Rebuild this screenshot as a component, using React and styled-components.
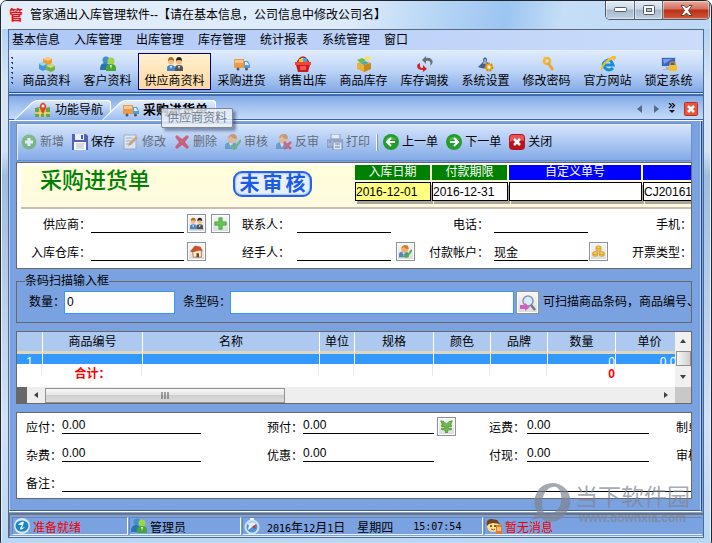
import React from "react";
import styled, { createGlobalStyle, css } from "styled-components";

const GlobalStyle = createGlobalStyle`
  * { box-sizing: border-box; }
  html, body { margin: 0; padding: 0; background: #fff; }
  body, button, input {
    font-family: "Liberation Sans", "Noto Sans CJK SC", sans-serif;
    font-size: 12px;
    color: #000;
  }
  button { padding: 0; border: 0; background: none; cursor: default; }
`;

const Window = styled.div`
  position: relative;
  display: flex;
  flex-direction: column;
  min-height: 100vh;
  padding: 0 7px 8px 7px;
  border: 1px solid #20262e;
  border-radius: 7px 7px 6px 6px;
  overflow: hidden;
  background: linear-gradient(180deg, #d3e4f7 0, #b3d2f4 28px, #d5e5f5 80px, #d3e3f3 150px, #9fbde0 175px, #d2e2f2 420px, #b9d7f3 100%);
  box-shadow: inset 0 0 0 1px #e8f3fd;
`;

const TitleBar = styled.header`
  display: flex;
  align-items: flex-start;
  height: 28px;
  flex: none;
  margin: 0 -6px;
  padding-left: 7px;
  background: linear-gradient(100deg, #e4eefa 0, #dceafa 50%, #b4d4f5 62%, #9cc5f1 71%, #c6def7 79%, #bcd8f6 100%);
`;

const AppMark = styled.span`
  width: 15px;
  margin-top: 7px;
  font-size: 14px;
  line-height: 15px;
  font-weight: 700;
  color: #f00d0d;
`;

const TitleText = styled.h1`
  flex: 1;
  margin: 6px 0 0 6px;
  font-size: 12px;
  line-height: 16px;
  font-weight: 400;
  white-space: nowrap;
`;

const Controls = styled.div`
  display: flex;
  height: 19px;
  border: 1px solid #4c5a6c;
  border-top: 0;
  border-radius: 0 0 5px 5px;
  overflow: hidden;
`;

const Control = styled.button`
  display: grid;
  place-items: center;
  width: ${(p) => (p.$close ? 47 : 28)}px;
  border-left: ${(p) => (p.$first ? 0 : 1)}px solid #5c6b7d;
  background: ${(p) => (p.$close
    ? "linear-gradient(#e9a99c 0, #d4705c 45%, #b92e15 50%, #d2593b 100%)"
    : "linear-gradient(#e4edf6 0, #c9d7e6 45%, #a5b7cb 50%, #c2d2e4 100%)")};
  box-shadow: inset 0 0 0 1px rgba(255, 255, 255, 0.45);
`;

const Client = styled.div`
  flex: 1;
  display: flex;
  flex-direction: column;
  border: 1px solid #4d6b96;
  border-top-color: #5b6876;
  background: #7ba2e0;
  overflow: hidden;
`;

const MenuBar = styled.nav`
  display: flex;
  gap: 14px;
  height: 21px;
  flex: none;
  padding-left: 3px;
  background: linear-gradient(90deg, #aec8f7, #cbdcfa);
  border-bottom: 1px solid #e3edfc;
`;

const MenuItem = styled.button`
  line-height: 20px;
  white-space: nowrap;
`;

const MainBar = styled.div`
  display: flex;
  align-items: flex-start;
  height: 42px;
  flex: none;
  padding-top: 2px;
  background: linear-gradient(#deebfd 0, #c0d6f8 45%, #82a9e5 100%);
  border-bottom: 1px solid #27509a;
`;

const Grip = styled.span`
  width: 7px;
  height: 32px;
  margin-top: 2px;
  flex: none;
  background: radial-gradient(circle, #27416f 0 1px, transparent 1px) 0 0 / 7px 5px;
`;

const MainButton = styled.button`
  display: flex;
  flex-direction: column;
  align-items: center;
  flex: none;
  width: ${(p) => (p.$active ? 73 : 61)}px;
  height: 37px;
  padding-top: 2px;
  border: 1px solid ${(p) => (p.$active ? "#000080" : "transparent")};
  background: ${(p) => (p.$active ? "linear-gradient(#fff1d0, #ffd8a0)" : "transparent")};
  line-height: 18px;
  white-space: nowrap;
`;

const Icon = styled.svg`
  display: block;
  flex: none;
  width: 16px;
  height: 16px;
  opacity: ${(p) => (p.$faded ? 0.65 : 1)};
`;

const TabStrip = styled.div`
  display: flex;
  align-items: flex-end;
  height: 27px;
  flex: none;
  margin-top: 1px;
  padding-left: 5px;
  border-top: 2px solid #3f6db5;
  border-bottom: 1px solid #fff;
  background: linear-gradient(#82a9e5 0, #a4c3f1 45%, #c9dcf9 100%);
  box-shadow: inset 0 -1px 0 #3462aa, 0 -1px 0 #d5e4fb;
`;

const Tab = styled.button`
  position: relative;
  z-index: 0;
  display: flex;
  align-items: center;
  gap: 4px;
  width: ${(p) => (p.$active ? 114 : 97)}px;
  height: 20px;
  margin-left: ${(p) => (p.$active ? -9 : 0)}px;
  padding-left: 21px;
  font-weight: ${(p) => (p.$active ? 700 : 400)};
  font-size: ${(p) => (p.$active ? 13 : 12)}px;
  line-height: 18px;
  white-space: nowrap;
  &::before, &::after {
    content: "";
    position: absolute;
    z-index: -1;
    inset: 0;
    background: #fff;
    clip-path: polygon(0 100%, 18px 2px, 22px 0, calc(100% - 2px) 0, 100% 2px, 100% 100%);
  }
  &::after {
    inset: 1px 1px 0 1px;
    background: ${(p) => (p.$active ? "linear-gradient(#e2edfe, #9dbff0)" : "linear-gradient(#d9e7fd, #86ace8)")};
  }
`;

const TabTools = styled.div`
  display: flex;
  align-items: center;
  gap: 8px;
  height: 22px;
  margin-left: auto;
  padding-right: 5px;
  svg { display: block; }
`;

const Tooltip = styled.div`
  position: absolute;
  z-index: 2;
  left: 160px;
  top: 107px;
  padding: 0 5px;
  border: 1px solid rgba(90, 90, 90, 0.7);
  border-radius: 2px;
  background: rgba(235, 241, 250, 0.8);
  box-shadow: 3px 3px 3px rgba(40, 60, 100, 0.5);
  color: #777d88;
  line-height: 18px;
`;

const Workspace = styled.main`
  flex: 1;
  display: flex;
  flex-direction: column;
  margin-right: 2px;
  padding: 2px 8px 11px 6px;
  border: 1px solid #b9cff3;
  border-top: 0;
  border-bottom: 1px solid #3a62a4;
  background: #7ba2e0;
  box-shadow: 0 1px 0 #fff, 1px 0 0 #234d90;
`;

const ActionBar = styled.div`
  display: flex;
  align-items: center;
  gap: 8px;
  height: 38px;
  padding-left: 4px;
  border: 1px solid #6e8fc4;
  background: linear-gradient(#d6e5fb 0, #b6cff5 40%, #83aae6 100%);
  box-shadow: inset 1px 1px 0 #e4eefd;
`;

const Action = styled.button`
  display: flex;
  align-items: center;
  gap: 3px;
  flex: none;
  line-height: 16px;
  color: #000;
  &:disabled { color: #646b78; }
`;

const Divider = styled.span`
  width: 2px;
  height: 17px;
  margin: 0 -3px 0 -2px;
  background: #fff;
  border-right: 1px solid #7898cd;
`;

const panel = css`
  border: 1px solid #686868;
  background: #fff;
  overflow: hidden;
`;

const OrderPanel = styled.section`
  ${panel}
  height: 107px;
  flex: none;
  margin-top: 1px;
`;

const Banner = styled.div`
  display: flex;
  height: 46px;
  margin-left: 4px;
  padding-left: 19px;
  border-top: 3px solid #fff;
  border-bottom: 2px solid #c9bfae;
  background: linear-gradient(#ffffda, #fff9e0);
`;

const FormTitle = styled.h2`
  width: 193px;
  flex: none;
  margin: 0;
  font-size: 22px;
  line-height: 30px;
  font-weight: 500;
  color: #008000;
`;

const Stamp = styled.strong`
  display: flex;
  justify-content: space-around;
  width: 79px;
  height: 26px;
  flex: none;
  margin: 5px 42px 0 0;
  padding: 0 3px;
  border: 2px solid #2464ea;
  border-radius: 9px;
  background: #e7f0f8;
  box-shadow: inset 0 0 2px #2464ea;
  font-size: 20px;
  line-height: 22px;
  font-weight: 700;
  white-space: nowrap;
  color: #1b5be8;
`;

const HeadField = styled.label`
  display: flex;
  flex-direction: column;
  flex: none;
  width: ${(p) => p.$width}px;
  margin: -1px 0 0 1px;
  span {
    height: 15px;
    margin-right: 1px;
    background: ${(p) => p.$tone};
    color: #fff;
    line-height: 15px;
    text-align: center;
  }
  input {
    width: 100%;
    height: 19px;
    margin-top: 2px;
    padding: 0;
    border: 1px solid #000;
    border-radius: 0;
    background: ${(p) => p.$fill || "#fff"};
    box-shadow: 2px 3px 0 #aaa69b;
  }
`;

const OrderFields = styled.div`
  display: grid;
  grid-template-columns: 74px 93px 58px 55px 94px 38px 65px 94px 44px 60px;
  grid-auto-rows: 28px;
  padding-top: 5px;
`;

const Label = styled.label`
  line-height: 20px;
  padding: 1px ${(p) => p.$pad || 0}px 0 0;
  white-space: nowrap;
  text-align: ${(p) => (p.$end ? "right" : "left")};
`;

const LineInput = styled.input`
  width: 100%;
  height: ${(p) => p.$height || 19}px;
  padding: 0;
  border: 0;
  border-bottom: 1px solid #000;
  border-radius: 0;
  background: transparent;
  outline: 0;
`;

const Tools = styled.div`
  display: flex;
  gap: 5px;
  padding-left: ${(p) => p.$pad}px;
`;

const ToolButton = styled.button`
  display: grid;
  place-items: center;
  flex: none;
  width: ${(p) => p.$size || 19}px;
  height: ${(p) => p.$size || 19}px;
  border: 1px solid #8a929c;
  background: linear-gradient(#f7f7f7, #dcdcdc);
  box-shadow: inset 0 0 0 1px #fff;
  svg { width: ${(p) => (p.$size ? 16 : 13)}px; height: ${(p) => (p.$size ? 16 : 13)}px; }
`;

const ScanBox = styled.fieldset`
  min-width: 0;
  margin: 6px 0 0;
  padding: 0 0 8px 12px;
  border: 1px solid #686868;
  legend {
    margin-left: -4px;
    padding: 0;
    line-height: 13px;
  }
`;

const ScanRow = styled.div`
  display: flex;
  height: 23px;
  margin-top: 3px;
  line-height: 22px;
  white-space: nowrap;
  label { flex: none; }
  label + input { margin-left: -1px; }
`;

const BoxInput = styled.input`
  min-width: 0;
  width: ${(p) => p.$width || "auto"};
  flex: ${(p) => (p.$grow ? "1" : "none")};
  height: 23px;
  margin-right: ${(p) => (p.$grow ? 2 : 8)}px;
  padding: 0 2px 2px;
  border: 1px solid #3399ff;
  border-radius: 0;
  background: #fff;
  outline: 0;
`;

const Hint = styled.span`
  width: 148px;
  flex: none;
  margin-left: 4px;
  z-index: 1;
`;

const GridPanel = styled.section`
  ${panel}
  display: grid;
  grid-template-columns: minmax(0, 1fr) 16px;
  grid-template-rows: 55px 16px;
  flex: none;
  margin-top: 8px;
`;

const TableClip = styled.div`
  overflow: hidden;
`;

const Table = styled.table`
  width: calc(100% + 9px);
  table-layout: fixed;
  border-collapse: separate;
  border-spacing: 0;
  th, td { padding: 0; border-right: 1px solid #fff; }
  th {
    height: 22px;
    border-bottom: 3px solid #ddd8bd;
    background: #adc9ef;
    font-weight: 400;
    line-height: 18px;
  }
`;

const RowCell = styled.td`
  background: #3399ff;
  color: #fff;
  text-align: ${(p) => (p.$center ? "center" : "right")};
  div {
    height: 10px;
    overflow: hidden;
    line-height: 16px;
  }
`;

const TotalCell = styled.td`
  color: #f00;
  font-weight: 700;
  line-height: 20px;
  text-align: ${(p) => (p.$center ? "center" : "right")};
  background: linear-gradient(#e8e8e8, #e8e8e8) right top / 1px 12px no-repeat;
`;

const VScroll = styled.div`
  display: grid;
  grid-template-rows: 18px 16px 21px;
  place-items: center;
  background: #f0f0f0;
`;

const VThumb = styled.span`
  width: 15px;
  height: 15px;
  border: 1px solid #929292;
  background: linear-gradient(90deg, #f8f8f8, #cfcfcf);
`;

const HScroll = styled.div`
  display: flex;
  align-items: center;
  border-left: 10px solid #686868;
  background: #eee;
`;

const HThumb = styled.span`
  display: grid;
  place-items: center;
  width: 37%;
  height: 15px;
  border: 1px solid #929292;
  background: linear-gradient(#f7f7f7 0, #e6e6e6 45%, #cfcfcf 50%, #dcdcdc 100%);
`;

const ScrollArrow = styled.button`
  display: grid;
  place-items: center;
  width: 18px;
  height: 16px;
  margin-left: ${(p) => (p.$end ? "auto" : 0)};
`;

const Corner = styled.span`
  background: #c8c8c8;
`;

const PayPanel = styled.section`
  ${panel}
  flex: none;
  height: 87px;
  margin-top: 8px;
  padding: 4px 0 0 9px;
`;

const PayFields = styled.div`
  display: grid;
  grid-template-columns: 36px 139px 66px 36px 131px 55px 38px 122px 27px 48px;
  grid-auto-rows: 28px;
`;

const NoteRow = styled.div`
  display: flex;
  label { flex: none; }
`;

const StatusBar = styled.footer`
  display: flex;
  height: 24px;
  flex: none;
  margin-top: 2px;
  padding: 2px 0 1px 2px;
  border-top: 2px solid #74726b;
  border-left: 1px solid #74726b;
  border-bottom: 1px solid #dceafc;
  background: #7ba2e0;
`;

const StatusCell = styled.div`
  display: flex;
  align-items: center;
  gap: 3px;
  width: ${(p) => (p.$width ? p.$width + "px" : "auto")};
  flex: ${(p) => (p.$width ? "none" : "1")};
  padding-left: 1px;
  border-top: 1px solid #6885b5;
  border-left: 1px solid #6885b5;
  border-bottom: 1px solid #e8f1fe;
  border-right: ${(p) => (p.$width ? 1 : 0)}px solid #fff;
  margin-right: 1px;
  color: ${(p) => (p.$alert ? "#f00000" : "#000")};
  font-family: ${(p) => (p.$mono ? '"DejaVu Sans Mono", "Noto Sans CJK SC", monospace' : "inherit")};
  font-size: ${(p) => (p.$mono ? 10 : 12)}px;
  white-space: pre;
  b { font-weight: 400; font-size: 12px; }
  time { margin-left: 4px; }
  time + b { margin: 0 17px 0 9px; }
`;

const Watermark = styled.div`
  position: absolute;
  right: 21px;
  bottom: 21px;
  z-index: 3;
  display: flex;
  align-items: flex-start;
  gap: 3px;
  color: rgba(125, 132, 145, 0.7);
  pointer-events: none;
  svg { display: block; flex: none; }
  p { margin: 0; font-size: 23px; line-height: 28px; font-weight: 400; }
  small { display: block; font-size: 12px; line-height: 14px; font-weight: 700; text-align: center; }
`;

const person = (x, hair, coat) => (
  <g>
    <path d={`M${x - 4} 15v-3q0-3 4-3t4 3v3z`} fill={coat} />
    <path d={`M${x - 1} 10l1 3 1-3z`} fill="#fff" />
    <circle cx={x} cy="5.5" r="3" fill="#f2bd82" />
    <path d={`M${x - 3} 5q0-4 3-4t3 4q-3-2-6 0z`} fill={hair} />
  </g>
);

const clerk = (
  <g>
    <path d="M0 15v-3q0-4 6-4t6 4v3z" fill="#4d86c0" />
    <path d="M4 9l2 5 2-5z" fill="#e9f2fb" />
    <circle cx="7" cy="5" r="4.500" fill="#f1b071" />
    <path d="M3 4q1-4 5-4t4 5Q7 5 6 2 5 4 3 4z" fill="#d17b32" />
  </g>
);

const art = {
  goods: <><path d="M4 3l5-2 4 2v4L9 9 4 7z" fill="#f49a25" /><path d="M4 3l5 2 4-2-4-2z" fill="#ffd078" /><path d="M0 8l4-2 4 2v5l-4 2-4-2z" fill="#439ad0" /><path d="M0 8l4-2 4 2-4 2z" fill="#9dd7f5" /><path d="M7 10l5-2 4 2v4l-4 2-5-2z" fill="#76ae43" /><path d="M7 10l5-2 4 2-4 2z" fill="#c2df83" /></>,
  clients: <><circle cx="6" cy="4" r="3.500" fill="#3f91ca" /><path d="M0 13q0-6 5-6t5 6v1H0z" fill="#2875b4" /><circle cx="11" cy="5" r="3.500" fill="#9dd448" /><path d="M6 15v-3q0-4 5-4t5 4v3z" fill="#49a632" /><path d="M10 9l1 4 1-4z" fill="#e6f7d8" /></>,
  suppliers: <>{person(4, "#b36d1a", "#4388cf")}{person(12, "#242424", "#4e535c")}</>,
  truck: <><path d="M0 3h10v9H0z" fill="#e99a4d" /><path d="M1 4h8v3H1z" fill="#ffc68a" /><path d="M10 5h4l2 4v3h-6z" fill="#5a9bd0" /><path d="M11 6h2l2 3h-4z" fill="#dff1ff" /><circle cx="4" cy="13" r="1.500" fill="#555" /><circle cx="12.500" cy="13" r="1.500" fill="#555" /></>,
  basket: <><path d="M2 7q6-12 12 0" fill="none" stroke="#b82218" strokeWidth="1.500" /><path d="M4 3h4v4H4z" fill="#f6c722" /><path d="M8 2h4v5H8z" fill="#43a4df" /><path d="M0 6h16v3H0z" fill="#f04538" /><path d="M1 9h14l-2 7H3z" fill="#d01818" /><path d="M5 11h6M5 13h6" stroke="#ff9c90" /></>,
  stock: <><path d="M1 7l7-2 7 2v6l-7 3-7-3z" fill="#e9b13b" /><path d="M8 9l7-2v6l-7 3z" fill="#c98918" /><path d="M1 4l5-2 4 2-5 3z" fill="#67bd48" /><path d="M8 2l4-2 3 3-4 2z" fill="#ffde58" /><path d="M5 7l4-2 4 2-5 2z" fill="#48a4d8" /></>,
  transfer: <><path d="M3 7v3q0 2 3 2V9l4 4-4 3v-2Q0 14 0 10q0-2 3-3z" fill="#db2020" /><path d="M13 10q4-3 2-6-2-3-6-2V0L5 4l4 4V5q6-1 4 5z" fill="#68707a" /></>,
  settings: <><path d="M7 1l2 2v3l5 5q-6 3-14 0l5-5V3z" fill="#435f91" /><path d="M6 3h2l1 5H5z" fill="#91a9cf" /><circle cx="11" cy="11" r="3.500" fill="#f2b128" stroke="#d58a10" strokeDasharray="2 1" strokeWidth="2" /><circle cx="11" cy="11" r="1.500" fill="#fff" /></>,
  key: <><path d="M1 1l5-1 3 6-4 3z" fill="#dcdedf" /><circle cx="8" cy="5" r="3" fill="none" stroke="#f3b431" strokeWidth="2.500" /><path d="M9 7l5 7M11 12l2-2" stroke="#eba521" strokeWidth="2.500" /></>,
  web: <><path d="M13 12Q9 16 5 12T6 5q5-3 7 4H5" fill="none" stroke="#168edb" strokeWidth="3" /><path d="M1 15Q0 9 8 3t8-2q0 2-2 4 0-3-3-1Q5 7 3 12q-1 3-2 3z" fill="#f5bd2b" /></>,
  lock: <><path d="M0 1h15v10H0z" fill="#bdcfe2" /><path d="M1 2h13v8H1z" fill="#3565c7" /><path d="M2 3h9L3 8z" fill="#779de8" /><path d="M5 11h5v2h3v1H2v-1h3z" fill="#aab5c2" /><path d="M9 10V8q0-2 2.500-2T14 8v2" fill="none" stroke="#bf8818" strokeWidth="1.500" /><path d="M8 9h8v6H8z" fill="#f8bd2e" /></>,
  guide: <><path d="M0 6l5-1 5 1 5-1v10H0z" fill="#65a54a" /><path d="M5 6v9M10 6v9M0 11h15" stroke="#f7dd7a" strokeWidth="1.500" /><path d="M8 12Q4 7 5 3q3-5 6 0 1 3-3 9z" fill="#e34526" /><circle cx="8" cy="4" r="1.500" fill="#fff" /></>,
  add: <><circle cx="8" cy="8" r="7.500" fill="#65ac50" /><path d="M8 4v8M4 8h8" stroke="#fff" strokeWidth="3" /></>,
  save: <><path d="M0 0h14l2 2v14H0z" fill="#5661b8" /><path d="M3 0h9v6H3z" fill="#e8eff9" /><path d="M9 1h2v4H9z" fill="#4656aa" /><path d="M2 8h12v8H2z" fill="#fff" /><path d="M4 10h8M4 12h8M4 14h8" stroke="#aab5cb" /></>,
  edit: <><path d="M1 1h12v14H1z" fill="#f5f6f6" stroke="#949da8" /><path d="M3 4h7M3 7h6M3 10h3" stroke="#949da8" /><path d="M5 12l1-3 7-7 2 2-7 7z" fill="#d19540" /></>,
  remove: <path d="M1 3l2-2 5 4 5-4 2 2-4 5 4 5-2 2-5-4-5 4-2-2 4-5z" fill="#d72c40" />,
  approve: <>{clerk}<path d="M6 11l3 4 7-9" fill="none" stroke="#4fb34b" strokeWidth="2.500" /></>,
  reject: <>{clerk}<path d="M8 8l7 7M15 8l-7 7" stroke="#d33d43" strokeWidth="2.500" /></>,
  print: <><path d="M4 0h9v5H4z" fill="#f6f7fa" stroke="#737f91" /><path d="M0 6h16v7H0z" fill="#a4b0c5" stroke="#66758f" /><path d="M6 8h9v8H6z" fill="#fff" stroke="#617291" /><path d="M8 10h5M8 13h5M2 8h2" stroke="#47566f" /></>,
  prev: <><circle cx="8" cy="8" r="8" fill="#239b2d" /><path d="M2 6q6-7 12 0" fill="#69c756" opacity=".6" /><path d="M8 4L4 8l4 4M5 8h7" fill="none" stroke="#fff" strokeWidth="2" /></>,
  next: <><circle cx="8" cy="8" r="8" fill="#239b2d" /><path d="M2 6q6-7 12 0" fill="#69c756" opacity=".6" /><path d="M8 4l4 4-4 4M4 8h7" fill="none" stroke="#fff" strokeWidth="2" /></>,
  close: <><rect width="16" height="16" rx="4" fill="#b9131b" /><path d="M1 3q0-2 3-2h8q3 0 3 2v4Q6 4 1 8z" fill="#e75654" /><path d="M5 5l6 6M11 5l-6 6" stroke="#fff" strokeWidth="2.500" /></>,
  plus: <path d="M6 1h4v5h5v4h-5v5H6v-5H1V6h5z" fill="#67c653" stroke="#43a23a" />,
  home: <><path d="M3 7h11v8H4z" fill="#f6e9c8" stroke="#99734d" /><path d="M0 8l6-7 7 1 3 6-4-2-8 3z" fill="#c9512a" /><path d="M8 10h3v5H8z" fill="#70401f" /></>,
  coins: <g fill="#f6c64b" stroke="#d09a2a"><path d="M5 2q3-2 6 0v5q-3 2-6 0zM1 9q3-2 6 0v4q-3 2-6 0zM9 9q3-2 6 0v4q-3 2-6 0z" /><path d="M5 4q3 2 6 0M1 11q3 2 6 0M9 11q3 2 6 0" fill="none" /></g>,
  search: <><circle cx="8" cy="6" r="5" fill="#d8edf9" stroke="#8595a3" strokeWidth="1.500" /><path d="M11 10l4 5" stroke="#6e7984" strokeWidth="2.500" /><path d="M0 10h5V8l5 4-5 4v-2H0z" fill="#ce63bf" /></>,
  cash: <path d="M1 1l4 1 3 3 3-3 4-1-2 5h1v2H10v2h4v2h-4l-1 4H7l-1-4H2v-2h4V8H2V6h1z" fill="#72b94c" stroke="#4f9136" />,
  ready: <><circle cx="8" cy="8" r="8" fill="#dce4ea" /><ellipse cx="8" cy="8" rx="6.500" ry="5.500" fill="#1686c8" /><path d="M4 7q3-4 6-3L8 10l3-1q-5 5-5 1l2-3z" fill="#e6faff" /></>,
  clock: <><circle cx="8" cy="9" r="6.500" fill="#4c94d4" stroke="#d5e2ed" strokeWidth="2" /><path d="M3 6q5-4 10 0l-5 3z" fill="#d7effc" /><path d="M8 9l4-3-1 5z" fill="#c33445" /><path d="M8 9l-4 3 1-5z" fill="#fff" /><path d="M6 0h4v2H6z" fill="#edf2f6" /></>,
  message: <><circle cx="7" cy="8" r="6" fill="#ffe28a" /><path d="M1 8Q-1 1 6 1l5 1 3 4-7-1-4 1z" fill="#74401e" /><circle cx="5" cy="8" r="1" fill="#333" /><circle cx="9" cy="8" r="1" fill="#333" /><path d="M5 11q3 2 4 0" stroke="#ce3c21" fill="none" /><path d="M10 7h6v9h-6z" fill="#e47a22" /><path d="M11 10h4M11 12h4" stroke="#fff" /></>,
};

const Pic = ({ name, faded }) => (
  <Icon viewBox="0 0 16 16" $faded={faded} aria-hidden="true">{art[name]}</Icon>
);

const Triangle = ({ d, fill = "#404040", size = 8 }) => (
  <svg width={size} height={size} viewBox="0 0 8 8" aria-hidden="true"><path d={d} fill={fill} /></svg>
);

const menus = ["基本信息", "入库管理", "出库管理", "库存管理", "统计报表", "系统管理", "窗口"];

const mainTools = [
  ["goods", "商品资料"], ["clients", "客户资料"], ["suppliers", "供应商资料"], ["truck", "采购进货"],
  ["basket", "销售出库"], ["stock", "商品库存"], ["transfer", "库存调拨"], ["settings", "系统设置"],
  ["key", "修改密码"], ["web", "官方网站"], ["lock", "锁定系统"],
];

const actions = [
  ["add", "新增", true], ["save", "保存", false], ["edit", "修改", true], ["remove", "删除", true],
  ["approve", "审核", true], ["reject", "反审", true], ["print", "打印", true],
];

const navActions = [["prev", "上一单"], ["next", "下一单"], ["close", "关闭"]];

const headFields = [
  { id: "inDate", label: "入库日期", value: "2016-12-01", width: 76, tone: "#008000", fill: "#ffff80" },
  { id: "dueDate", label: "付款期限", value: "2016-12-31", width: 76, tone: "#008000" },
  { id: "customNo", label: "自定义单号", value: "", width: 133, tone: "#0000ff" },
  { id: "orderNo", label: "", value: "CJ20161201", width: 133, tone: "#0000ff" },
];

const columns = [
  ["", 26], ["商品编号", 100], ["名称", 0], ["单位", 35], ["规格", 79],
  ["颜色", 57], ["品牌", 57], ["数量", 68], ["单价", 68],
];
const rowValues = ["1", "", "", "", "", "", "", "0", "0.00"];
const totals = ["", "合计：", "", "", "", "", "", "0", ""];

const Line = ({ id, label, value = "", end, height, pad }) => (
  <>
    <Label htmlFor={id} $end={end} $pad={pad}>{label}</Label>
    <LineInput id={id} defaultValue={value} $height={height} />
  </>
);

export default function App() {
  return (
    <>
      <GlobalStyle />
      <Window>
        <TitleBar>
          <AppMark>管</AppMark>
          <TitleText>管家通出入库管理软件--【请在基本信息，公司信息中修改公司名】</TitleText>
          <Controls>
            <Control $first aria-label="最小化">
              <svg width="13" height="6" viewBox="0 0 13 6"><rect x=".5" y=".5" width="12" height="4" rx="1" fill="#fff" stroke="#525c69" /></svg>
            </Control>
            <Control aria-label="最大化">
              <svg width="12" height="10" viewBox="0 0 12 10"><rect x=".5" y=".5" width="11" height="9" rx="1" fill="#fff" stroke="#525c69" /><rect x="3.500" y="3.500" width="5" height="3" fill="#b3c2d4" stroke="#525c69" /></svg>
            </Control>
            <Control $close aria-label="关闭窗口">
              <svg width="13" height="11" viewBox="0 0 13 11"><path d="M1 .5h3l2.500 2.500L9 .5h3L8.500 5.500 12 10.500H9L6.500 8 4 10.500H1l3.500-5z" fill="#fff" stroke="#60403c" /></svg>
            </Control>
          </Controls>
        </TitleBar>

        <Client>
          <MenuBar>{menus.map((m) => <MenuItem key={m}>{m}</MenuItem>)}</MenuBar>
          <MainBar>
            <Grip />
            {mainTools.map(([icon, text]) => (
              <MainButton key={text} $active={icon === "suppliers"}><Pic name={icon} />{text}</MainButton>
            ))}
          </MainBar>

          <TabStrip>
            <Tab><Pic name="guide" />功能导航</Tab>
            <Tab $active><Pic name="truck" />采购进货单</Tab>
            <TabTools>
              <button aria-label="向左"><Triangle d="M6 0v8L1 4z" fill="#596780" /></button>
              <button aria-label="向右"><Triangle d="M2 0v8l5-4z" fill="#596780" /></button>
              <button aria-label="更多标签">
                <svg width="8" height="12" viewBox="0 0 8 12"><path d="M1 0l2.500 2.500L1 5M4 0l2.500 2.500L4 5" fill="none" stroke="#111" strokeWidth="1.300" /><path d="M1 7h6L4 10z" fill="#111" /></svg>
              </button>
              <button aria-label="关闭标签">
                <svg width="14" height="14" viewBox="0 0 14 14"><rect x=".5" y=".5" width="13" height="13" rx="1" fill="#e7573f" stroke="#b6301f" /><path d="M4 4l6 6M10 4l-6 6" stroke="#fff" strokeWidth="2.500" /></svg>
              </button>
            </TabTools>
          </TabStrip>

          <Workspace>
            <ActionBar>
              {actions.map(([icon, text, off]) => (
                <Action key={text} disabled={off}><Pic name={icon} faded={off} />{text}</Action>
              ))}
              <Divider />
              {navActions.map(([icon, text]) => (
                <Action key={text}><Pic name={icon} />{text}</Action>
              ))}
            </ActionBar>

            <OrderPanel>
              <Banner>
                <FormTitle>采购进货单</FormTitle>
                <Stamp><span>未</span><span>审</span><span>核</span></Stamp>
                {headFields.map((f) => (
                  <HeadField key={f.id} $width={f.width} $tone={f.tone} $fill={f.fill}>
                    <span>{f.label}</span>
                    <input aria-label={f.label || "单号"} defaultValue={f.value} />
                  </HeadField>
                ))}
              </Banner>
              <OrderFields>
                <Line id="supplier" label="供应商：" end />
                <Tools $pad={3}>
                  <ToolButton aria-label="选择供应商"><Pic name="suppliers" /></ToolButton>
                  <ToolButton aria-label="新增供应商"><Pic name="plus" /></ToolButton>
                </Tools>
                <Line id="contact" label="联系人：" />
                <span />
                <Line id="phone" label="电话：" end pad={5} />
                <span />
                <Label $end>手机：</Label>

                <Line id="warehouse" label="入库仓库：" end />
                <Tools $pad={3}><ToolButton aria-label="选择仓库"><Pic name="home" /></ToolButton></Tools>
                <Line id="handler" label="经手人：" />
                <Tools $pad={5}><ToolButton aria-label="选择经手人"><Pic name="approve" /></ToolButton></Tools>
                <Line id="account" label="付款帐户：" value="现金" end pad={5} />
                <Tools $pad={1}><ToolButton aria-label="选择帐户"><Pic name="coins" /></ToolButton></Tools>
                <Label $end>开票类型：</Label>
              </OrderFields>
            </OrderPanel>

            <ScanBox>
              <legend>条码扫描输入框</legend>
              <ScanRow>
                <label htmlFor="qty">数量：</label>
                <BoxInput id="qty" defaultValue="0" $width="111px" />
                <label htmlFor="barcode">条型码：</label>
                <BoxInput id="barcode" $grow />
                <ToolButton $size={23} aria-label="查找"><Pic name="search" /></ToolButton>
                <Hint>可扫描商品条码，商品编号、</Hint>
              </ScanRow>
            </ScanBox>

            <GridPanel>
              <TableClip>
                <Table>
                  <colgroup>
                    {columns.map(([name, width]) => <col key={name || "no"} width={width || undefined} />)}
                  </colgroup>
                  <thead>
                    <tr>{columns.map(([name]) => <th key={name || "no"} scope="col">{name}</th>)}</tr>
                  </thead>
                  <tbody>
                    <tr>{rowValues.map((v, i) => <RowCell key={i} $center={i === 0}><div>{v}</div></RowCell>)}</tr>
                    <tr>{totals.map((v, i) => <TotalCell key={i} $center={i === 1}>{v}</TotalCell>)}</tr>
                  </tbody>
                </Table>
              </TableClip>
              <VScroll>
                <Triangle d="M1 6h6L4 2z" />
                <VThumb />
                <Triangle d="M1 2h6L4 6z" />
              </VScroll>
              <HScroll>
                <ScrollArrow aria-label="向左滚动"><Triangle d="M6 1v6L2 4z" /></ScrollArrow>
                <HThumb>
                  <svg width="8" height="7" viewBox="0 0 8 7"><path d="M1 0v7M4 0v7M7 0v7" stroke="#555" /></svg>
                </HThumb>
                <ScrollArrow $end aria-label="向右滚动"><Triangle d="M2 1v6l4-3z" /></ScrollArrow>
              </HScroll>
              <Corner />
            </GridPanel>

            <PayPanel>
              <PayFields>
                <Line id="payable" label="应付：" value="0.00" height={17} />
                <span />
                <Line id="prepaid" label="预付：" value="0.00" height={17} />
                <Tools $pad={3}><ToolButton aria-label="预付款"><Pic name="cash" /></ToolButton></Tools>
                <Line id="freight" label="运费：" value="0.00" height={17} />
                <span />
                <Label>制单人：</Label>

                <Line id="misc" label="杂费：" value="0.00" height={17} />
                <span />
                <Line id="discount" label="优惠：" value="0.00" height={17} />
                <span />
                <Line id="cash" label="付现：" value="0.00" height={17} />
                <span />
                <Label>审核人：</Label>
              </PayFields>
              <NoteRow><Line id="note" label="备注：" /></NoteRow>
            </PayPanel>
          </Workspace>

          <StatusBar>
            <StatusCell $width={116} $alert><Pic name="ready" />准备就绪</StatusCell>
            <StatusCell $width={112}><Pic name="clients" />管理员</StatusCell>
            <StatusCell $width={241} $mono>
              <Pic name="clock" />
              <time>2016<b>年</b>12<b>月</b>1<b>日</b></time><b>星期四</b><span>15:07:54</span>
            </StatusCell>
            <StatusCell $alert><Pic name="message" />暂无消息</StatusCell>
          </StatusBar>
        </Client>

        <Tooltip role="tooltip">供应商资料</Tooltip>
        <Watermark>
          <svg width="42" height="42" viewBox="0 0 42 42">
            <path fillRule="evenodd" d="M22 0C35 0 44 12 39 25 34 38 20 43 11 35L0 37Q6 34 7 29C0 15 9 0 22 0zM23 4C14 5 9 19 14 30 25 34 33 23 31 12 30 6 27 3 23 4z" fill="currentColor" />
          </svg>
          <div><p>当下软件园</p><small>www.downxia.com</small></div>
        </Watermark>
      </Window>
    </>
  );
}
